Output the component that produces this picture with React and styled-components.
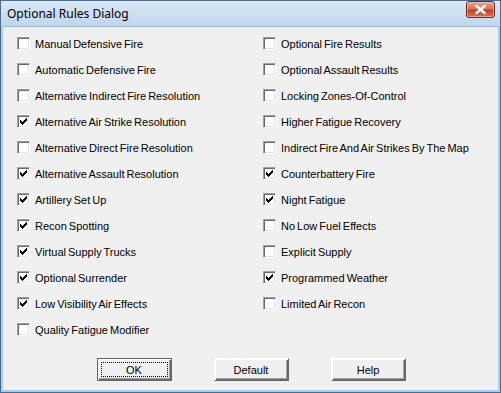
import React from "react";
import styled, { createGlobalStyle } from "styled-components";

const Global = createGlobalStyle`
  html, body { margin: 0; padding: 0; background: #fff; }
  body { font-family: "Liberation Sans", Arial, sans-serif; }
`;

const Window = styled.div`
  width: 501px;
  height: 393px;
  box-sizing: border-box;
  border: 1px solid #4c6d8c;
  background: #a9cdee;
  display: flex;
  flex-direction: column;
  position: relative;
`;

const TitleBar = styled.div`
  height: 25px;
  flex: none;
  display: flex;
  align-items: center;
  padding: 0 6px;
  background: linear-gradient(#dbe8f5, #c0d6ed);
  font-family: "Noto Sans", "Open Sans", sans-serif;
  font-size: 12px;
  color: #000;
`;

const Title = styled.span`
  flex: 1;
  margin-top: -1px;
`;

const CloseButton = styled.div`
  width: 27px;
  height: 15px;
  border: 1px solid #6b2a24;
  border-radius: 3px;
  margin-top: -8px;
  margin-right: -1px;
  background: linear-gradient(#e9a899 0%, #d9705c 45%, #c4412b 55%, #d5765e 100%);
  box-shadow: inset 0 0 0 1px rgba(255, 210, 200, 0.5);
  display: flex;
  align-items: center;
  justify-content: center;
`;

const Client = styled.div`
  flex: 1;
  margin: 0 2px 2px 2px;
  background: #f0f0f0;
  border-top: 1px solid #9fb7cf;
  display: flex;
  flex-direction: column;
`;

const Columns = styled.div`
  display: grid;
  grid-template-columns: 246px 1fr;
  padding: 10px 0 0 14px;
`;

const Column = styled.div`
  display: flex;
  flex-direction: column;
  gap: 13px;
`;

const Row = styled.label`
  display: flex;
  align-items: center;
  height: 13px;
  font-size: 11px;
  word-spacing: -1px;
  color: #000;
  white-space: nowrap;
`;

const Box = styled.span`
  width: 13px;
  height: 13px;
  box-sizing: border-box;
  flex: none;
  background: #fff;
  border-top: 1px solid #a0a0a0;
  border-left: 1px solid #a0a0a0;
  border-right: 1px solid #fff;
  border-bottom: 1px solid #fff;
  box-shadow: inset 1px 1px 0 #696969, inset -1px -1px 0 #e3e3e3;
  margin-right: 5px;
  display: flex;
`;

const ButtonRow = styled.div`
  display: flex;
  justify-content: center;
  gap: 42px;
  margin-top: auto;
  margin-bottom: 9px;
  padding-left: 1px;
`;

const Button = styled.button`
  width: 75px;
  height: 23px;
  box-sizing: border-box;
  padding: 0;
  font-family: "Liberation Sans", Arial, sans-serif;
  font-size: 11px;
  color: #000;
  background: #f0f0f0;
  border: 1px solid;
  border-color: ${(p) => (p.$default ? "#646464" : "#fff #696969 #696969 #fff")};
  box-shadow: inset 1px 1px 0 #fff, inset -1px -1px 0 #696969,
    inset -2px -2px 0 #a0a0a0;
  position: relative;
  display: flex;
  align-items: center;
  justify-content: center;
`;

const Focus = styled.span`
  position: absolute;
  inset: 3px;
  border: 1px dotted #000;
`;

const Check = () => (
  <svg width="11" height="11" viewBox="0 0 11 11" shapeRendering="crispEdges">
    {[
      [0, 2],
      [1, 3],
      [2, 4],
      [3, 3],
      [4, 2],
      [5, 1],
      [6, 0],
    ].map(([x, y]) => (
      <rect key={x} x={x + 2} y={y + 2} width="1" height="3" fill="#000" />
    ))}
  </svg>
);

const CloseX = () => (
  <svg width="11" height="9" viewBox="0 0 11 9">
    <path
      d="M1.5 1 L9.5 8 M9.5 1 L1.5 8"
      stroke="#fff"
      strokeWidth="2.4"
      strokeLinecap="square"
    />
  </svg>
);

const left = [
  ["Manual Defensive Fire", false],
  ["Automatic Defensive Fire", false],
  ["Alternative Indirect Fire Resolution", false],
  ["Alternative Air Strike Resolution", true],
  ["Alternative Direct Fire Resolution", false],
  ["Alternative Assault Resolution", true],
  ["Artillery Set Up", true],
  ["Recon Spotting", true],
  ["Virtual Supply Trucks", true],
  ["Optional Surrender", true],
  ["Low Visibility Air Effects", true],
  ["Quality Fatigue Modifier", false],
];

const right = [
  ["Optional Fire Results", false],
  ["Optional Assault Results", false],
  ["Locking Zones-Of-Control", false],
  ["Higher Fatigue Recovery", false],
  ["Indirect Fire And Air Strikes By The Map", false],
  ["Counterbattery Fire", true],
  ["Night Fatigue", true],
  ["No Low Fuel Effects", false],
  ["Explicit Supply", false],
  ["Programmed Weather", true],
  ["Limited Air Recon", false],
];

const Option = ({ label, checked }) => (
  <Row>
    <Box>{checked && <Check />}</Box>
    {label}
  </Row>
);

export default function App() {
  return (
    <>
      <Global />
      <Window>
        <TitleBar>
          <Title>Optional Rules Dialog</Title>
          <CloseButton>
            <CloseX />
          </CloseButton>
        </TitleBar>
        <Client>
          <Columns>
            <Column>
              {left.map(([l, c]) => (
                <Option key={l} label={l} checked={c} />
              ))}
            </Column>
            <Column>
              {right.map(([l, c]) => (
                <Option key={l} label={l} checked={c} />
              ))}
            </Column>
          </Columns>
          <ButtonRow>
            <Button $default>
              <Focus />
              OK
            </Button>
            <Button>Default</Button>
            <Button>Help</Button>
          </ButtonRow>
        </Client>
      </Window>
    </>
  );
}
